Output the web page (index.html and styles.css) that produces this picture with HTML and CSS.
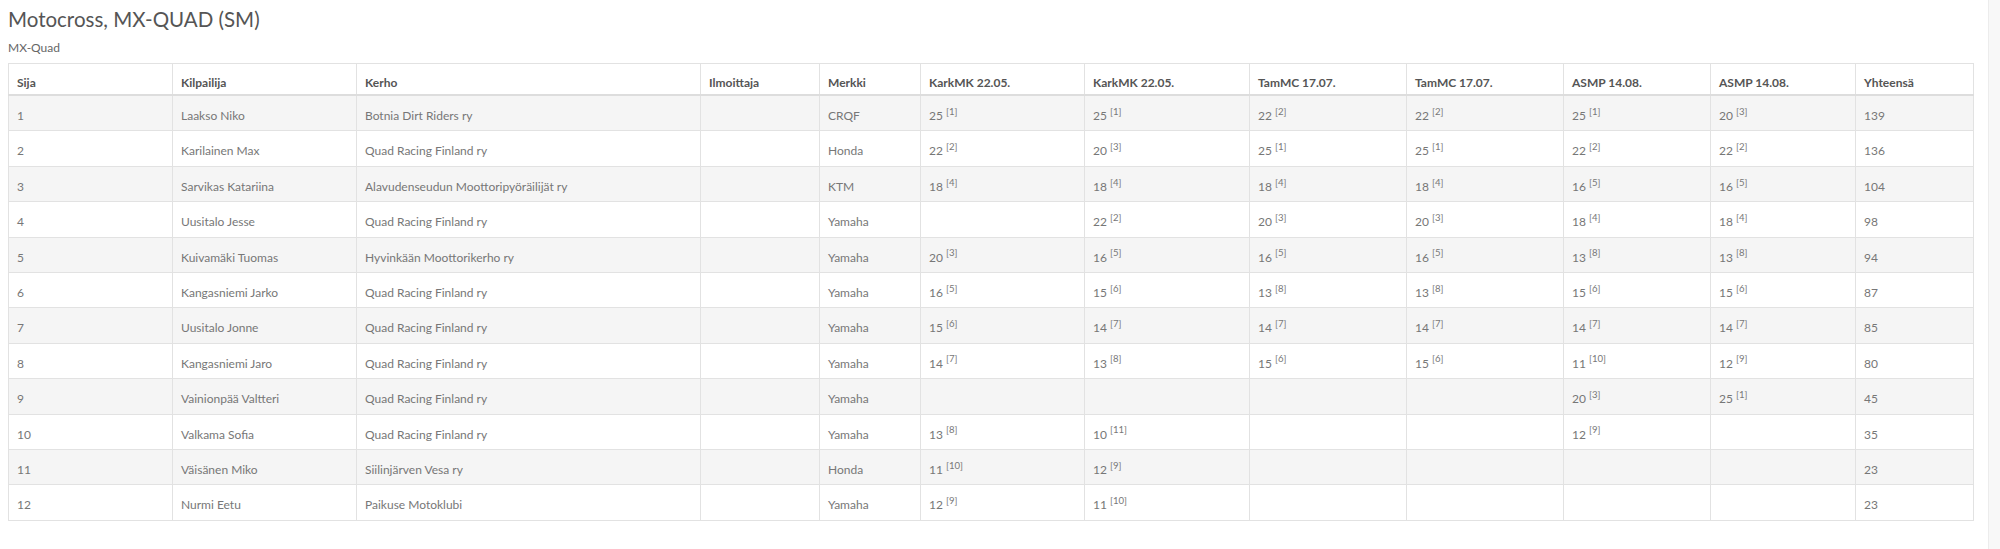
FILE: index.html
```html
<!DOCTYPE html>
<html lang="fi">
<head>
<meta charset="utf-8">
<title>Motocross, MX-QUAD (SM)</title>
<link rel="stylesheet" href="styles.css">
</head>
<body>
<div class="page">
  <main class="main">
    <h1 class="title">Motocross, MX-QUAD (SM)</h1>
    <p class="subtitle">MX-Quad</p>
    <table class="results">
      <colgroup>
        <col class="c-sija"><col class="c-kilp"><col class="c-kerho"><col class="c-ilm"><col class="c-merkki">
        <col class="c-k1"><col class="c-k2"><col class="c-t1"><col class="c-t2"><col class="c-a1"><col class="c-a2"><col class="c-tot">
      </colgroup>
      <thead>
        <tr><th>Sija</th><th>Kilpailija</th><th>Kerho</th><th>Ilmoittaja</th><th>Merkki</th><th>KarkMK 22.05.</th><th>KarkMK 22.05.</th><th>TamMC 17.07.</th><th>TamMC 17.07.</th><th>ASMP 14.08.</th><th>ASMP 14.08.</th><th>Yhteensä</th></tr>
      </thead>
      <tbody>
        <tr><td>1</td><td>Laakso Niko</td><td>Botnia Dirt Riders ry</td><td></td><td>CRQF</td><td>25 <sup>[1]</sup></td><td>25 <sup>[1]</sup></td><td>22 <sup>[2]</sup></td><td>22 <sup>[2]</sup></td><td>25 <sup>[1]</sup></td><td>20 <sup>[3]</sup></td><td>139</td></tr>
        <tr><td>2</td><td>Karilainen Max</td><td>Quad Racing Finland ry</td><td></td><td>Honda</td><td>22 <sup>[2]</sup></td><td>20 <sup>[3]</sup></td><td>25 <sup>[1]</sup></td><td>25 <sup>[1]</sup></td><td>22 <sup>[2]</sup></td><td>22 <sup>[2]</sup></td><td>136</td></tr>
        <tr><td>3</td><td>Sarvikas Katariina</td><td>Alavudenseudun Moottoripyöräilijät ry</td><td></td><td>KTM</td><td>18 <sup>[4]</sup></td><td>18 <sup>[4]</sup></td><td>18 <sup>[4]</sup></td><td>18 <sup>[4]</sup></td><td>16 <sup>[5]</sup></td><td>16 <sup>[5]</sup></td><td>104</td></tr>
        <tr><td>4</td><td>Uusitalo Jesse</td><td>Quad Racing Finland ry</td><td></td><td>Yamaha</td><td></td><td>22 <sup>[2]</sup></td><td>20 <sup>[3]</sup></td><td>20 <sup>[3]</sup></td><td>18 <sup>[4]</sup></td><td>18 <sup>[4]</sup></td><td>98</td></tr>
        <tr><td>5</td><td>Kuivamäki Tuomas</td><td>Hyvinkään Moottorikerho ry</td><td></td><td>Yamaha</td><td>20 <sup>[3]</sup></td><td>16 <sup>[5]</sup></td><td>16 <sup>[5]</sup></td><td>16 <sup>[5]</sup></td><td>13 <sup>[8]</sup></td><td>13 <sup>[8]</sup></td><td>94</td></tr>
        <tr><td>6</td><td>Kangasniemi Jarko</td><td>Quad Racing Finland ry</td><td></td><td>Yamaha</td><td>16 <sup>[5]</sup></td><td>15 <sup>[6]</sup></td><td>13 <sup>[8]</sup></td><td>13 <sup>[8]</sup></td><td>15 <sup>[6]</sup></td><td>15 <sup>[6]</sup></td><td>87</td></tr>
        <tr><td>7</td><td>Uusitalo Jonne</td><td>Quad Racing Finland ry</td><td></td><td>Yamaha</td><td>15 <sup>[6]</sup></td><td>14 <sup>[7]</sup></td><td>14 <sup>[7]</sup></td><td>14 <sup>[7]</sup></td><td>14 <sup>[7]</sup></td><td>14 <sup>[7]</sup></td><td>85</td></tr>
        <tr><td>8</td><td>Kangasniemi Jaro</td><td>Quad Racing Finland ry</td><td></td><td>Yamaha</td><td>14 <sup>[7]</sup></td><td>13 <sup>[8]</sup></td><td>15 <sup>[6]</sup></td><td>15 <sup>[6]</sup></td><td>11 <sup>[10]</sup></td><td>12 <sup>[9]</sup></td><td>80</td></tr>
        <tr><td>9</td><td>Vainionpää Valtteri</td><td>Quad Racing Finland ry</td><td></td><td>Yamaha</td><td></td><td></td><td></td><td></td><td>20 <sup>[3]</sup></td><td>25 <sup>[1]</sup></td><td>45</td></tr>
        <tr><td>10</td><td>Valkama Sofia</td><td>Quad Racing Finland ry</td><td></td><td>Yamaha</td><td>13 <sup>[8]</sup></td><td>10 <sup>[11]</sup></td><td></td><td></td><td>12 <sup>[9]</sup></td><td></td><td>35</td></tr>
        <tr><td>11</td><td>Väisänen Miko</td><td>Siilinjärven Vesa ry</td><td></td><td>Honda</td><td>11 <sup>[10]</sup></td><td>12 <sup>[9]</sup></td><td></td><td></td><td></td><td></td><td>23</td></tr>
        <tr><td>12</td><td>Nurmi Eetu</td><td>Paikuse Motoklubi</td><td></td><td>Yamaha</td><td>12 <sup>[9]</sup></td><td>11 <sup>[10]</sup></td><td></td><td></td><td></td><td></td><td>23</td></tr>
      </tbody>
    </table>
  </main>
  <aside class="side"></aside>
</div>
</body>
</html>
```

FILE: styles.css
```css
html, body {
  margin: 0;
  padding: 0;
  background: #fff;
}
body {
  font-family: Lato, "Open Sans", "Liberation Sans", sans-serif;
  color: #777;
  font-size: 12px;
}
.page {
  display: flex;
  min-height: 549px;
}
.main {
  flex: 1;
  padding: 0 14px 0 8px;
}
.side {
  width: 13px;
  background: #f8f8f8;
  border-left: 1px solid #ececec;
}
.title {
  font-size: 20.5px;
  font-weight: 400;
  color: #555;
  margin: 0;
  padding-top: 6px;
  line-height: 27px;
}
.subtitle {
  margin: 0;
  padding-top: 6px;
  font-size: 12px;
  line-height: 17px;
  color: #666;
}
.results {
  margin-top: 7px;
  width: 1965px;
  table-layout: fixed;
  border-collapse: collapse;
  border: 1px solid #ddd;
}
.c-sija { width: 164px; }
.c-kilp { width: 184px; }
.c-kerho { width: 344px; }
.c-ilm { width: 119px; }
.c-merkki { width: 101px; }
.c-k1 { width: 164px; }
.c-k2 { width: 165px; }
.c-t1 { width: 157px; }
.c-t2 { width: 157px; }
.c-a1 { width: 147px; }
.c-a2 { width: 145px; }
.c-tot { width: 118px; }
.results th,
.results td {
  border: 1px solid #e2e2e2;
  padding: 8px;
  text-align: left;
  line-height: 17px;
  vertical-align: top;
  white-space: nowrap;
}
.results th {
  font-weight: 700;
  color: #555;
  padding-top: 10px;
  padding-bottom: 3px;
  border-bottom: 2px solid #ddd;
}
.results td {
  height: 17.4px;
  padding-top: 11px;
  padding-bottom: 6px;
}
.results tbody tr:nth-child(odd) {
  background: #f5f5f5;
}
.results sup {
  font-size: 80%;
  line-height: 0;
  position: relative;
  vertical-align: baseline;
  top: -0.55em;
}
```
